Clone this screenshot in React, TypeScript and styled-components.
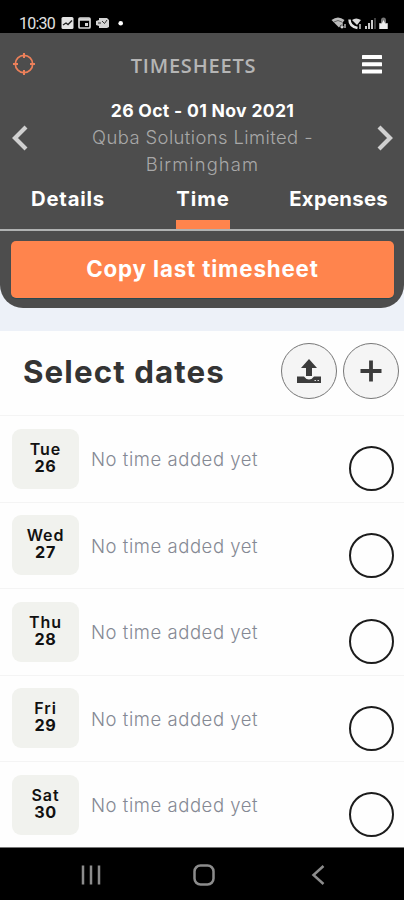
import React from 'react';
import styled, { createGlobalStyle } from 'styled-components';

const Global = createGlobalStyle`
  *{box-sizing:border-box}
  body{margin:0;background:#000;font-family:Inter,"Noto Sans",sans-serif}
  button{font:inherit;border:0;padding:0;margin:0;background:none;color:inherit}
  svg{display:block;flex:none}
`;

const Screen = styled.div`
  width:404px;height:900px;overflow:hidden;display:flex;flex-direction:column;background:#fefefe;
`;
const StatusBar = styled.div`
  height:33px;flex:none;background:#000;color:#e2e2e2;display:flex;align-items:flex-start;
  justify-content:space-between;padding:15px 15px 0 19px;
`;
const StatusGroup = styled.div`display:flex;align-items:center;height:17px;`;
const Clock = styled.span`
  font:400 16px/17px Roboto,sans-serif;letter-spacing:-0.8px;width:42px;
`;
const Body = styled.div`background:#edf1f8;height:298px;flex:none;`;
const Header = styled.header`
  background:#4d4d4d;height:275px;border-radius:0 0 23px 23px;display:flex;flex-direction:column;
`;
const TitleRow = styled.div`
  height:63px;display:flex;align-items:center;justify-content:space-between;padding:0 21px 2px 13px;
`;
const Title = styled.h1`
  margin:5px 9px 0 0;font:600 20px/26px "Open Sans",sans-serif;color:#b5b5b5;letter-spacing:0.8px;
`;
const PeriodRow = styled.div`
  height:84px;display:flex;justify-content:space-between;padding:0 10px 0 11px;
`;
const Arrow = styled.button`width:18px;height:26px;margin-top:29px;`;
const Period = styled.div`text-align:center;white-space:nowrap;padding-top:1px;`;
const DateRange = styled.div`
  font-weight:700;font-size:17.6px;line-height:27px;color:#fff;letter-spacing:0.3px;
`;
const Company = styled.div<{ $spacing: number }>`
  font-weight:300;font-size:18.4px;line-height:26.5px;color:#a8a8a8;letter-spacing:${p => p.$spacing}px;
`;
const Tabs = styled.nav`
  height:51px;display:flex;justify-content:space-between;padding:0 16px 0 31px;border-bottom:2px solid #b0b2b2;
`;
const Tab = styled.button<{ $active?: boolean; $spacing: number }>`
  height:49px;padding:7px 0 9px;color:#fff;font-weight:700;font-size:20.3px;line-height:24px;
  letter-spacing:${p => p.$spacing}px;
  margin-left:${p => (p.$active ? '12px' : '0')};
  border-bottom:9px solid ${p => (p.$active ? '#ff844d' : 'transparent')};
  white-space:nowrap;
`;
const CopyButton = styled.button`
  margin:10px 10px 0 11px;height:57px;flex:none;border-radius:5px;background:#ff844d;color:#fff;
  font-weight:700;font-size:22.3px;letter-spacing:0.85px;padding-bottom:2px;box-shadow:0 1px 1px #244751;
`;
const SectionHead = styled.div`
  height:84px;flex:none;display:flex;align-items:center;padding:0 5px 4px 23px;gap:6px;
`;
const SectionTitle = styled.h2`
  margin:2px auto 0 0;font-size:31.3px;font-weight:650;line-height:40px;color:#343434;letter-spacing:1.1px;white-space:nowrap;
`;
const RoundButton = styled.button`
  width:56px;height:56px;border-radius:50%;border:1px solid #777;background:#f5f5f5;
  display:flex;align-items:center;justify-content:center;
`;
const Days = styled.main`flex:1;overflow:hidden;`;
const DayRow = styled.div`
  height:86.6px;border-top:1px solid #f4f4f4;display:flex;align-items:flex-start;padding:12.6px 10.5px 0 12px;
`;
const DayTile = styled.div`
  width:67px;height:60px;border-radius:9px;background:#f1f2ee;color:#111;padding-top:12px;text-align:center;
  font-weight:600;font-size:16px;line-height:17px;letter-spacing:0.9px;
`;
const DayDate = styled.div`font-weight:700;font-size:16.2px;letter-spacing:0.6px;`;
const Note = styled.span`
  margin-left:12px;padding-top:18.400px;flex:1;font-weight:300;font-size:18.5px;line-height:24px;color:#858994;letter-spacing:0.55px;
`;
const Radio = styled.button`
  width:45px;height:45px;border-radius:50%;border:2px solid #1c1c1c;margin-top:17.400px;
`;
const NavBar = styled.footer`
  height:53px;flex:none;border-top:1px solid #777;background:#000;
  display:grid;grid-template-columns:1fr 1fr 1fr;justify-items:center;align-items:center;padding:1px 29px 0 34px;
`;

const days = [['Tue', '26'], ['Wed', '27'], ['Thu', '28'], ['Fri', '29'], ['Sat', '30']];

const Chevron = ({ flip }: { flip?: boolean }) => (
  <svg width="18" height="26" viewBox="0 0 18 26" fill="none" stroke="#d0d0d0" strokeWidth="4.2">
    <path d={flip ? 'M3 2 14 13 3 24' : 'M15 2 4 13 15 24'} />
  </svg>
);

const NoticeIcons = () => (
  <svg width="64" height="17" viewBox="0 0 64 17">
    <rect x="0.500" y="2" width="12" height="12" rx="1.5" fill="#e4e4e4" />
    <path d="m2 10 3-2 2 1.500 4-4" stroke="#222" strokeWidth="1.400" fill="none" />
    <rect x="18" y="3" width="11" height="10" rx="1" fill="none" stroke="#d8d8d8" strokeWidth="1.7" />
    <path d="M18 4.5h11" stroke="#d8d8d8" strokeWidth="2.5" />
    <path d="M24 8h3v3h-3z" fill="#d8d8d8" />
    <path d="M38 3h8l2 2v7l-2 1h-8v-2l-3-1V6l3-1z" fill="#d4d4d4" />
    <path d="m41 6 2.500 2.500L46 5M37 8h3" stroke="#333" strokeWidth="1" fill="none" />
    <circle cx="59.7" cy="8.3" r="2.3" fill="#fff" />
  </svg>
);

const SignalIcons = () => (
  <svg width="58" height="17" viewBox="0 0 58 17">
    <path d="M.5 5q6.500-5 13 0L8 12.500z" fill="#bbb" />
    <path d="M3 7q4-3 8 0" stroke="#666" fill="none" />
    <path d="M11 8v5m-1.500-1.500L11 13l1.500-1.500M14 13V9" stroke="#ddd" strokeWidth="1.2" fill="none" />
    <path d="M18.500 4.500q0 7 8 8.500" stroke="#e4e4e4" strokeWidth="2.500" fill="none" />
    <path d="M21 5q4-3 9 0l-4 5z" fill="#d8d8d8" />
    <path d="M29 9v5" stroke="#ddd" strokeWidth="1.400" />
    <path d="M35 11v3M38 8v6M41 5v9" stroke="#d4d4d4" strokeWidth="1.900" />
    <path d="M44 3v11" stroke="#555" strokeWidth="1.500" />
    <path d="M48 14V8h2V5.500q0-3 2.500-3T55 5.500V8h2v6z" fill="#777" />
    <path d="M48.500 8.500h8V14h-8z" fill="#eee" />
    <path d="m52.500 5-2.500 5h5z" fill="#eee" />
  </svg>
);

export default function App() {
  return (
    <>
      <Global />
      <Screen>
        <StatusBar>
          <StatusGroup><Clock>10:30</Clock><NoticeIcons /></StatusGroup>
          <StatusGroup><SignalIcons /></StatusGroup>
        </StatusBar>
        <Body>
          <Header>
            <TitleRow>
              <svg width="22" height="22" viewBox="0 0 22 22" fill="none" stroke="#ec805a" strokeWidth="1.7">
                <circle cx="11" cy="11" r="8.700" />
                <path d="M11 0v5M11 17v5M0 11h5M17 11h5" strokeWidth="2" />
              </svg>
              <Title>TIMESHEETS</Title>
              <svg width="22" height="20" viewBox="0 0 22 20" fill="#fff">
                <rect x="1" y="1" width="20" height="4" rx=".5" />
                <rect x="1" y="8.200" width="20" height="4" rx=".5" />
                <rect x="1" y="15.400" width="20" height="4" rx=".5" />
              </svg>
            </TitleRow>
            <PeriodRow>
              <Arrow aria-label="Previous"><Chevron /></Arrow>
              <Period>
                <DateRange>26 Oct - 01 Nov 2021</DateRange>
                <Company $spacing={0.42}>Quba Solutions Limited -</Company>
                <Company $spacing={1.1}>Birmingham</Company>
              </Period>
              <Arrow aria-label="Next"><Chevron flip /></Arrow>
            </PeriodRow>
            <Tabs>
              <Tab $spacing={0.8}>Details</Tab>
              <Tab $active $spacing={1}>Time</Tab>
              <Tab $spacing={0.3}>Expenses</Tab>
            </Tabs>
            <CopyButton>Copy last timesheet</CopyButton>
          </Header>
        </Body>
        <SectionHead>
          <SectionTitle>Select dates</SectionTitle>
          <RoundButton aria-label="Upload">
            <svg width="26" height="26" viewBox="0 0 26 26" fill="#3c3c3c">
              <path d="M13 1 21 10h-5v8h-6v-8H5z" />
              <path d="M1 18.500h7q2 3 5 3t5-3h7V25H1z" />
              <path d="M18.500 22.500h1.500M21.500 22.500H23" stroke="#ddd" strokeWidth="1.200" />
            </svg>
          </RoundButton>
          <RoundButton aria-label="Add">
            <svg width="22" height="22" viewBox="0 0 22 22" stroke="#3c3c3c" strokeWidth="3.800">
              <path d="M11 .5v21M.5 11h21" />
            </svg>
          </RoundButton>
        </SectionHead>
        <Days>
          {days.map(([name, date]) => (
            <DayRow key={date}>
              <DayTile>{name}<DayDate>{date}</DayDate></DayTile>
              <Note>No time added yet</Note>
              <Radio aria-label={`${name} ${date}`} />
            </DayRow>
          ))}
        </Days>
        <NavBar>
          <svg width="20" height="20" viewBox="0 0 20 20" stroke="#8c8c8c" strokeWidth="2.500">
            <path d="M2 .5v19M10 .5v19M18 .5v19" />
          </svg>
          <svg width="22" height="22" viewBox="0 0 22 22" fill="none" stroke="#8c8c8c" strokeWidth="2.500">
            <rect x="1.500" y="1.500" width="19" height="19" rx="6" />
          </svg>
          <svg width="14" height="20" viewBox="0 0 14 20" fill="none" stroke="#8c8c8c" strokeWidth="2.500">
            <path d="M12.500 1 2.500 10l10 9" />
          </svg>
        </NavBar>
      </Screen>
    </>
  );
}
